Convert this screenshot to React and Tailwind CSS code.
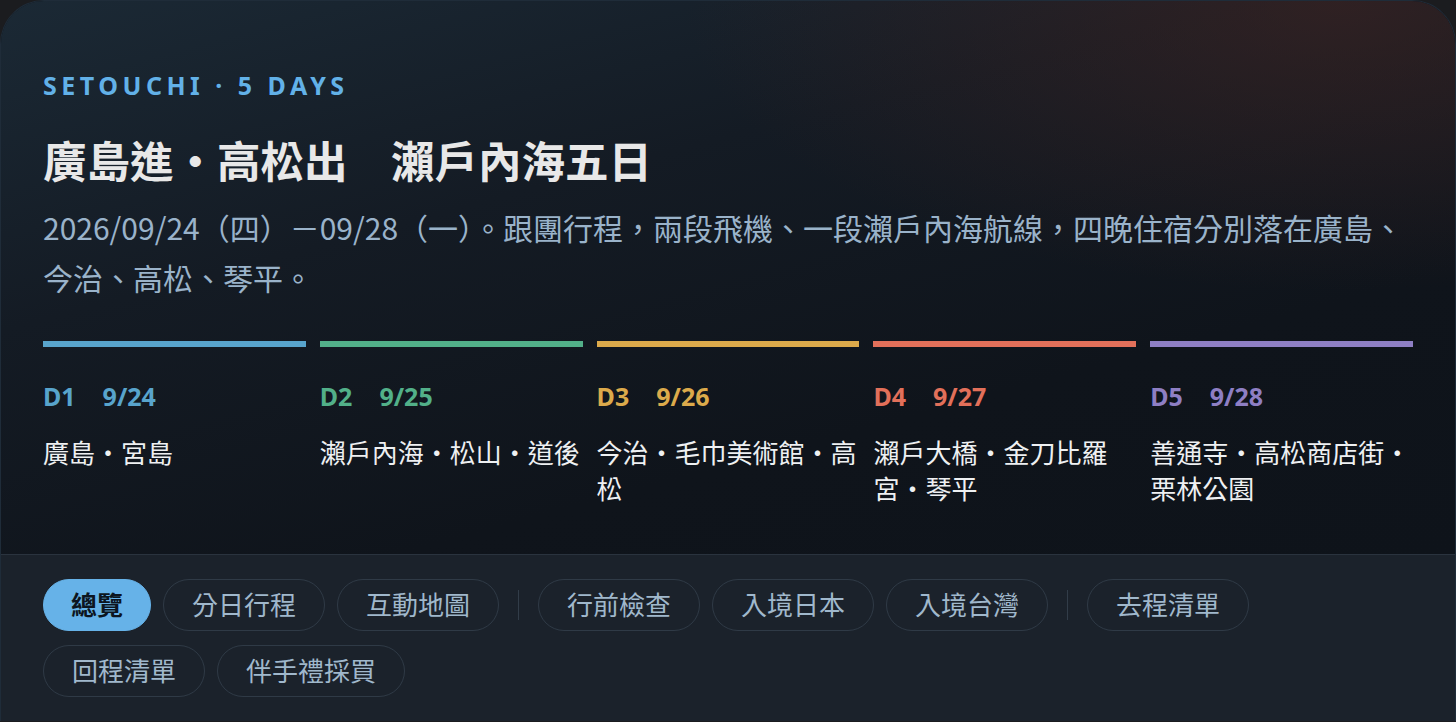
import React from "react";

const days = [
  { d: "D1", date: "9/24", place: "廣島・宮島", bar: "bg-[#58a4cc]", text: "text-[#58a4cc]" },
  { d: "D2", date: "9/25", place: "瀨戶內海・松山・道後", bar: "bg-[#52b089]", text: "text-[#52b089]" },
  { d: "D3", date: "9/26", place: "今治・毛巾美術館・高松", bar: "bg-[#dcaa4b]", text: "text-[#dcaa4b]" },
  { d: "D4", date: "9/27", place: "瀨戶大橋・金刀比羅宮・琴平", bar: "bg-[#e2705a]", text: "text-[#e2705a]" },
  { d: "D5", date: "9/28", place: "善通寺・高松商店街・栗林公園", bar: "bg-[#8e7fc4]", text: "text-[#8e7fc4]" },
];

const tabs = [
  { t: "總覽", active: true },
  { t: "分日行程" },
  { t: "互動地圖" },
  { sep: true },
  { t: "行前檢查" },
  { t: "入境日本" },
  { t: "入境台灣" },
  { sep: true },
  { t: "去程清單" },
  { t: "回程清單" },
  { t: "伴手禮採買" },
];

const cjk = { fontFamily: '"Noto Sans CJK TC", sans-serif' };

export default function App() {
  return (
    <div
      className="min-h-screen w-full bg-[#1b1c1f] overflow-hidden"
      style={{ fontFamily: '"Noto Sans", "Noto Sans CJK TC", sans-serif' }}
    >
      <div className="w-[1456px] rounded-t-[44px] border border-b-0 border-[#1f2c39] overflow-hidden bg-[#0e131a]">
        <div className="px-[42px] pt-[69px] pb-[47px] bg-[radial-gradient(ellipse_60%_70%_at_92%_0%,rgba(70,38,34,0.55),transparent_75%),linear-gradient(165deg,#1b2935_0%,#141b24_35%,#0f141b_70%,#0e131a_100%)]">
          <div className="text-[25px] leading-[30px] font-bold tracking-[0.18em] text-[#62b1e8]">
            SETOUCHI · 5 DAYS
          </div>
          <h1 className="mt-[33px] text-[43.5px] leading-[56px] font-bold text-[#e8e8e8]">
            廣島進・高松出　瀨戶內海五日
          </h1>
          <p className="mt-[13px] text-[30px] leading-[50px] text-[#9ab3ca]" style={cjk}>
            2026/09/24（四）－09/28（一）。跟團行程，兩段飛機、一段瀨戶內海航線，四晚住宿分別落在廣島、
            <br />
            今治、高松、琴平。
          </p>
          <div className="mt-[39px] grid grid-cols-5 gap-x-[14px]">
            {days.map((day) => (
              <div key={day.d} className="flex flex-col">
                <div className={`h-[6px] ${day.bar}`} />
                <div className={`mt-[34px] flex gap-[27px] text-[25px] leading-[30px] font-bold ${day.text}`}>
                  <span>{day.d}</span>
                  <span>{day.date}</span>
                </div>
                <div className="mt-[24px] text-[26px] leading-[36px] text-[#eef0f2]">
                  {day.place}
                </div>
              </div>
            ))}
          </div>
        </div>
        <div className="border-t border-[#2a333e] bg-[#1b222b] px-[42px] pt-[24px] pb-[24px]">
          <div className="flex flex-wrap items-center gap-x-[12px] gap-y-[14px]">
            {tabs.map((tab, i) =>
              tab.sep ? (
                <div key={i} className="mx-[7px] h-[30px] w-px bg-[#323d49]" />
              ) : tab.active ? (
                <div
                  key={i}
                  className="flex h-[52px] items-center rounded-full border border-[#66b2e8] bg-[#66b2e8] px-[27px] text-[26px] font-bold text-[#0c1520]"
                >
                  {tab.t}
                </div>
              ) : (
                <div
                  key={i}
                  className="flex h-[52px] items-center rounded-full border border-[#2f3a46] px-[28px] text-[26px] text-[#a0b8cc]"
                >
                  {tab.t}
                </div>
              )
            )}
          </div>
        </div>
      </div>
    </div>
  );
}
